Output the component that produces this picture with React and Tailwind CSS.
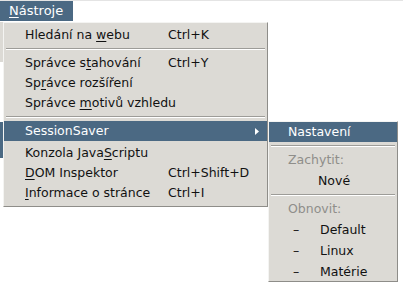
import React from "react";

const font = { fontFamily: '"DejaVu Sans", sans-serif' };

function U({ children }) {
  return <span className="underline underline-offset-2">{children}</span>;
}

function Item({ label, shortcut, active, arrow }) {
  return (
    <div
      className={`h-[20px] flex items-center pl-[21px] pr-[8px] ${
        active ? "bg-[#4b6983] text-white" : "text-[#111111]"
      }`}
    >
      <div className="w-[143px] whitespace-nowrap">{label}</div>
      <div className="flex-1 whitespace-nowrap">{shortcut}</div>
      {arrow && (
        <svg width="4" height="7" viewBox="0 0 4 7">
          <path d="M0 0 L4 3.5 L0 7 Z" fill="#ffffff" />
        </svg>
      )}
    </div>
  );
}

function Sep() {
  return (
    <div className="h-[8px] flex flex-col justify-center px-[2px]">
      <div className="h-px bg-[#9d9c98]" />
      <div className="h-px bg-white" />
    </div>
  );
}

export default function App() {
  return (
    <div
      className="relative w-[403px] h-[282px] bg-white overflow-hidden text-[12.5px]"
      style={font}
    >
      {/* menubar */}
      <div className="h-[21px] flex items-start border-t border-[#e4e4e4]">
        <div className="h-[20px] w-[73px] bg-[#4b6983] text-white flex items-center pl-[9px] text-[13px]">
          <U>N</U>ástroje
        </div>
      </div>

      {/* sliver of the window behind */}
      <div className="absolute left-0 top-[22px] w-[3px] h-[40px] bg-[#dcdad5]" />
      <div className="absolute left-0 top-[122px] w-[3px] h-[36px] bg-[#4b6983]" />

      {/* Tools menu */}
      <div className="absolute left-[3px] top-[22px] w-[265px] bg-[#dcdad5] border border-t-[#f4f4f2] border-l-[#f4f4f2] border-r-[#8e8d89] border-b-[#8e8d89] pt-[2px] pb-[3px]">
        <Item label={<>Hledání na <U>w</U>ebu</>} shortcut="Ctrl+K" />
        <Sep />
        <Item label={<>Správce s<U>t</U>ahování</>} shortcut="Ctrl+Y" />
        <Item label={<>Sp<U>r</U>ávce rozšíření</>} />
        <Item label={<>Správce <U>m</U>otivů vzhledu</>} />
        <Sep />
        <Item label="SessionSaver" active arrow />
        <div className="h-[2px]" />
        <Item label={<>Konzola Java<U>S</U>criptu</>} />
        <Item label={<><U>D</U>OM Inspektor</>} shortcut="Ctrl+Shift+D" />
        <Item label={<><U>I</U>nformace o stránce</>} shortcut="Ctrl+I" />
      </div>

      {/* SessionSaver submenu */}
      <div className="absolute left-[268px] top-[121px] w-[130px] h-[161px] bg-[#dcdad5] border border-t-[#f4f4f2] border-l-[#f4f4f2] border-r-[#8e8d89] border-b-[#8e8d89]">
        <div className="h-[20px] bg-[#4b6983] text-white flex items-center pl-[19px]">
          Nastavení
        </div>
        <Sep />
        <div className="h-[21px] flex items-center pl-[19px] text-[#8f8e8a]">Zachytit:</div>
        <div className="h-[20px] flex items-center pl-[49px] text-[#111111]">Nové</div>
        <Sep />
        <div className="h-[21px] flex items-center pl-[19px] text-[#8f8e8a]">Obnovit:</div>
        {["Default", "Linux", "Matérie"].map((n) => (
          <div key={n} className="h-[21px] flex items-center text-[#111111]">
            <span className="w-[51px] pl-[24px]">–</span>
            <span>{n}</span>
          </div>
        ))}
      </div>
    </div>
  );
}
